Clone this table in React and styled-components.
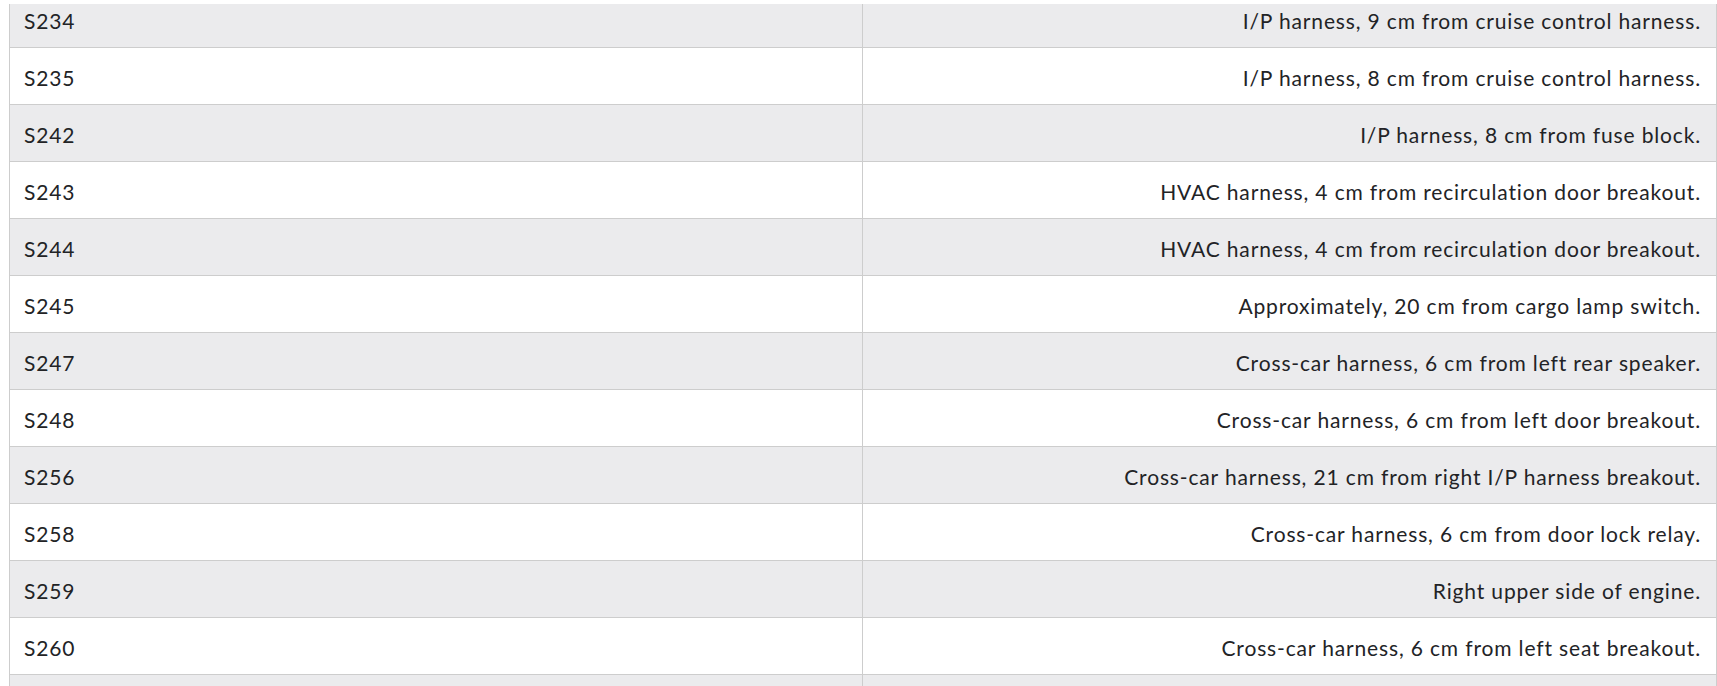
import React from "react";
import styled, { createGlobalStyle } from "styled-components";

const GlobalStyle = createGlobalStyle`
  html, body {
    margin: 0;
    padding: 0;
    background: #ffffff;
  }
  body {
    font-family: Lato, "Open Sans", "Liberation Sans", sans-serif;
    color: #222326;
  }
`;

const Page = styled.div`
  padding: 4px 0 0 9px;
  height: 686px;
  box-sizing: border-box;
  overflow: hidden;
`;

const Viewport = styled.div`
  height: 682px;
  overflow: hidden;
`;

const Table = styled.div`
  margin-top: -13px;
  border-left: 1px solid #cdcdcd;
  border-right: 1px solid #cdcdcd;
`;

const Row = styled.div`
  display: grid;
  grid-template-columns: 1fr 1fr;
  height: 57px;
  box-sizing: border-box;
  border-bottom: 1px solid #cdcdcd;
  background: ${(p) => (p.$shaded ? "#ebebed" : "#ffffff")};
`;

const Cell = styled.div`
  display: flex;
  align-items: center;
  justify-content: ${(p) => (p.$right ? "flex-end" : "flex-start")};
  padding: ${(p) => (p.$right ? "2px 15px 0 0" : "2px 0 0 14px")};
  border-right: ${(p) => (p.$right ? "none" : "1px solid #cdcdcd")};
  font-size: 21px;
  letter-spacing: 0.85px;
  white-space: nowrap;
`;

const rows = [
  ["S234", "I/P harness, 9 cm from cruise control harness."],
  ["S235", "I/P harness, 8 cm from cruise control harness."],
  ["S242", "I/P harness, 8 cm from fuse block."],
  ["S243", "HVAC harness, 4 cm from recirculation door breakout."],
  ["S244", "HVAC harness, 4 cm from recirculation door breakout."],
  ["S245", "Approximately, 20 cm from cargo lamp switch."],
  ["S247", "Cross-car harness, 6 cm from left rear speaker."],
  ["S248", "Cross-car harness, 6 cm from left door breakout."],
  ["S256", "Cross-car harness, 21 cm from right I/P harness breakout."],
  ["S258", "Cross-car harness, 6 cm from door lock relay."],
  ["S259", "Right upper side of engine."],
  ["S260", "Cross-car harness, 6 cm from left seat breakout."],
  ["", ""],
];

export default function App() {
  return (
    <>
      <GlobalStyle />
      <Page>
        <Viewport>
          <Table>
            {rows.map(([id, loc], i) => (
              <Row key={i} $shaded={i % 2 === 0}>
                <Cell>{id}</Cell>
                <Cell $right>{loc}</Cell>
              </Row>
            ))}
          </Table>
        </Viewport>
      </Page>
    </>
  );
}
